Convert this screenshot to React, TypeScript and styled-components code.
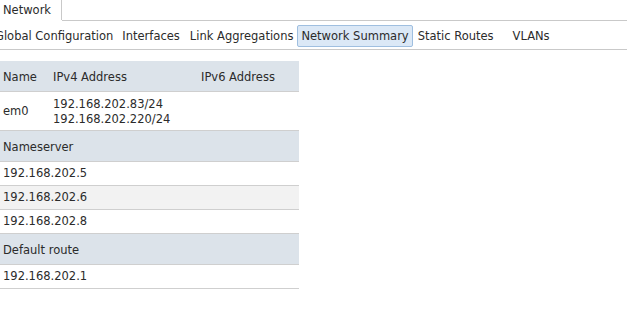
import React from "react";
import styled, { createGlobalStyle } from "styled-components";

const GlobalStyle = createGlobalStyle`
  html, body {
    margin: 0;
    padding: 0;
    background: #fff;
    overflow: hidden;
  }
  body {
    font-family: "DejaVu Sans", Verdana, sans-serif;
    font-size: 11.5px;
    color: #2b2b2b;
  }
`;

const Page = styled.div`
  width: 627px;
  height: 325px;
`;

const TabBar = styled.div`
  display: flex;
  height: 21px;
`;

const Tab = styled.div`
  display: flex;
  align-items: center;
  width: 58px;
  padding-left: 3px;
  height: 20px;
  border-right: 1px solid #c9c9c9;
`;

const TabFiller = styled.div`
  flex: 1;
  border-bottom: 1px solid #c9c9c9;
`;

const SubNav = styled.div`
  display: flex;
  align-items: center;
  height: 27px;
  margin-left: -10px;
  padding-top: 1px;
  border-bottom: 1px solid #c9c9c9;
`;

const NavItem = styled.div<{ $active?: boolean; $gap?: number }>`
  display: flex;
  align-items: center;
  height: 20px;
  padding: 0 ${(p) => (p.$active ? 3 : 4)}px;
  margin-left: ${(p) => (p.$active ? 1 : 0)}px;
  margin-right: ${(p) => (p.$gap ?? 0) + (p.$active ? 1 : 0)}px;
  white-space: nowrap;
  border: 1px solid ${(p) => (p.$active ? "#9fbfe0" : "transparent")};
  background: ${(p) => (p.$active ? "#dbe8f6" : "transparent")};
  border-radius: 2px;
`;

const Table = styled.table`
  margin-top: 11px;
  width: 299px;
  border-collapse: collapse;
`;

const Row = styled.tr<{ $h: number; $bg?: string }>`
  height: ${(p) => p.$h}px;
  background: ${(p) => p.$bg ?? "#fff"};
  border-bottom: 1px solid #cfcfcf;
`;

const Cell = styled.td<{ $w?: number; $pt?: number }>`
  padding: ${(p) => p.$pt ?? 1}px 0 0 3px;
  width: ${(p) => (p.$w ? `${p.$w}px` : "auto")};
  vertical-align: middle;
  line-height: 15px;
  white-space: nowrap;
`;

const HEAD = "#dce3ea";
const ALT = "#f2f2f2";

const nameservers = ["192.168.202.5", "192.168.202.6", "192.168.202.8"];

export default function App() {
  return (
    <Page>
      <GlobalStyle />
      <TabBar>
        <Tab>Network</Tab>
        <TabFiller />
      </TabBar>
      <SubNav>
        <NavItem $gap={-1}>Global Configuration</NavItem>
        <NavItem $gap={0}>Interfaces</NavItem>
        <NavItem $gap={-2}>Link Aggregations</NavItem>
        <NavItem $active $gap={-1}>Network Summary</NavItem>
        <NavItem $gap={9}>Static Routes</NavItem>
        <NavItem>VLANs</NavItem>
      </SubNav>
      <Table>
        <tbody>
          <Row $h={30} $bg={HEAD}>
            <Cell $w={47} $pt={3}>Name</Cell>
            <Cell $w={145} $pt={3}>IPv4 Address</Cell>
            <Cell $pt={3}>IPv6 Address</Cell>
          </Row>
          <Row $h={39}>
            <Cell $pt={2}>em0</Cell>
            <Cell $pt={2}>
              192.168.202.83/24
              <br />
              192.168.202.220/24
            </Cell>
            <Cell />
          </Row>
          <Row $h={31} $bg={HEAD}>
            <Cell colSpan={3} $pt={3}>Nameserver</Cell>
          </Row>
          {nameservers.map((ns, i) => (
            <Row key={ns} $h={24} $bg={i % 2 === 1 ? ALT : "#fff"}>
              <Cell colSpan={3}>{ns}</Cell>
            </Row>
          ))}
          <Row $h={31} $bg={HEAD}>
            <Cell colSpan={3} $pt={3}>Default route</Cell>
          </Row>
          <Row $h={24}>
            <Cell colSpan={3}>192.168.202.1</Cell>
          </Row>
        </tbody>
      </Table>
    </Page>
  );
}
